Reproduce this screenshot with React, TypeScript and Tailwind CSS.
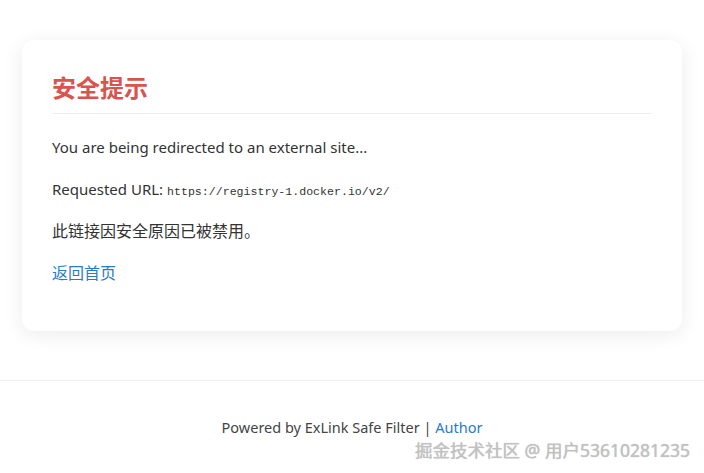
export default function App() {
  const font = { fontFamily: '"Noto Sans", "Noto Sans CJK SC", sans-serif' };
  return (
    <div className="relative min-h-[473px] bg-white text-[#333]" style={font}>
      <div className="mx-[22px] pt-10">
        <div className="rounded-xl bg-white px-[30px] pt-[30px] pb-[45px] shadow-[0_4px_20px_rgba(0,0,0,0.08)]">
          <h2 className="border-b border-[#eee] pb-[7px] text-[24px] leading-[36px] font-bold text-[#d9534f]">
            安全提示
          </h2>
          <p className="mt-5 mb-4 text-[15px] leading-[26px]">You are being redirected to an external site...</p>
          <p className="mb-[13px] text-[15px] leading-[26px]">
            Requested URL:{" "}
            <code className="text-[11.6px]" style={{ fontFamily: '"Liberation Mono", monospace' }}>
              https://registry-1.docker.io/v2/
            </code>
          </p>
          <p className="mb-4 text-[16px] leading-[26px]">此链接因安全原因已被禁用。</p>
          <p className="text-[16px] leading-[26px]">
            <a href="#" className="text-[#2b7bc4]">
              返回首页
            </a>
          </p>
        </div>
      </div>
      <footer className="mt-[49px] border-t border-[#eee] pt-[35px] text-center text-[14.5px] leading-[22px] text-[#444]">
        Powered by ExLink Safe Filter |{" "}
        <a href="#" className="text-[#2b7bc4]">
          Author
        </a>
      </footer>
      <div className="absolute right-[14px] bottom-[14px] text-[17.5px] leading-none text-[#c2c2c2] [text-shadow:0_0_1px_rgba(0,0,0,0.3)]">
        掘金技术社区 @ 用户53610281235
      </div>
    </div>
  );
}
